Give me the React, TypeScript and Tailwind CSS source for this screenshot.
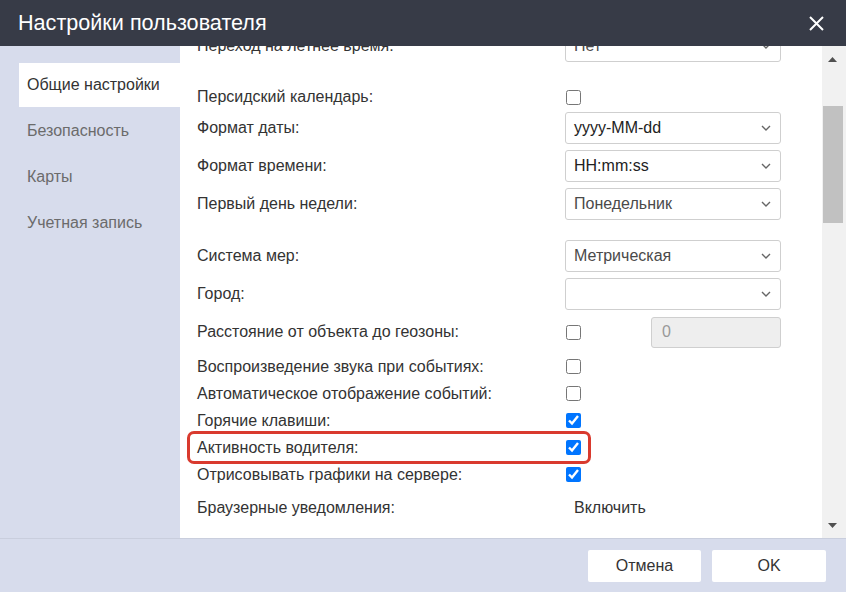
import React from 'react';

const font = { fontFamily: '"Liberation Sans", Arial, sans-serif' };

function Chevron() {
  return (
    <svg width="10" height="6" viewBox="0 0 10 6" className="shrink-0">
      <path d="M1 1l4 4 4-4" fill="none" stroke="#666" strokeWidth="1.4" />
    </svg>
  );
}

function Select({ value, muted }: { value?: string; muted?: boolean }) {
  return (
    <div className="flex h-[32px] w-[216px] items-center justify-between rounded-[3px] border border-[#cfcfcf] bg-white pl-[8px] pr-[9px]">
      <span className={`text-[16px] ${muted ? 'text-[#4a4a4a]' : 'text-[#222]'}`}>{value}</span>
      <Chevron />
    </div>
  );
}

function Check({ checked }: { checked?: boolean }) {
  return (
    <input
      type="checkbox"
      defaultChecked={checked}
      className="m-0 ml-[1px] h-[15px] w-[15px] accent-[#0075ff]"
    />
  );
}

function Row({
  label,
  children,
  h = 'h-[32px]',
  mt = '',
}: {
  label: string;
  children?: React.ReactNode;
  h?: string;
  mt?: string;
}) {
  return (
    <div className={`flex items-center ${h} ${mt}`}>
      <div className="w-[368px] shrink-0 whitespace-nowrap text-[16px] text-[#333]">{label}</div>
      {children}
    </div>
  );
}

const tabs = ['Общие настройки', 'Безопасность', 'Карты', 'Учетная запись'];

export default function App() {
  return (
    <div className="flex h-[592px] w-[846px] flex-col overflow-hidden bg-[#d7dcec]" style={font}>
      {/* Header */}
      <div className="flex h-[46px] shrink-0 items-center justify-between bg-[#373b47] pl-[18px] pr-[22px]">
        <span className="text-[21.6px] text-white">Настройки пользователя</span>
        <svg width="15" height="15" viewBox="0 0 15 15">
          <path d="M1 1l13 13M14 1L1 14" stroke="#fff" strokeWidth="2" />
        </svg>
      </div>

      <div className="flex min-h-0 flex-1">
        {/* Sidebar */}
        <div className="flex w-[180px] shrink-0 flex-col gap-[2px] pl-[19px] pt-[17px]">
          {tabs.map((t, i) => (
            <div
              key={t}
              className={`flex h-[44px] items-center pl-[8px] text-[16px] ${
                i === 0 ? 'bg-white text-[#333]' : 'text-[#6b6b6b]'
              }`}
            >
              {t}
            </div>
          ))}
        </div>

        {/* Content */}
        <div className="relative flex min-w-0 flex-1 overflow-hidden bg-white">
          <div className="flex-1 overflow-hidden pl-[17px]">
            <div className="mt-[-16px] flex flex-col">
              <Row label="Переход на летнее время:">
                <Select value="Нет" muted />
              </Row>
              <Row label="Персидский календарь:" h="h-[26px]" mt="mt-[22px]">
                <Check />
              </Row>
              <Row label="Формат даты:" mt="mt-[2px]">
                <Select value="yyyy-MM-dd" />
              </Row>
              <Row label="Формат времени:" mt="mt-[6px]">
                <Select value="HH:mm:ss" />
              </Row>
              <Row label="Первый день недели:" mt="mt-[6px]">
                <Select value="Понедельник" muted />
              </Row>
              <Row label="Система мер:" mt="mt-[20px]">
                <Select value="Метрическая" muted />
              </Row>
              <Row label="Город:" mt="mt-[6px]">
                <Select />
              </Row>
              <Row label="Расстояние от объекта до геозоны:" mt="mt-[6px]">
                <Check />
                <div className="ml-[70px] flex h-[31px] w-[130px] items-center rounded-[3px] border border-[#cfcfcf] bg-[#eeeeee] pl-[10px] text-[16px] text-[#999]">
                  0
                </div>
              </Row>
              <Row label="Воспроизведение звука при событиях:" h="h-[27px]" mt="mt-[5px]">
                <Check />
              </Row>
              <Row label="Автоматическое отображение событий:" h="h-[27px]">
                <Check />
              </Row>
              <Row label="Горячие клавиши:" h="h-[27px]">
                <Check checked />
              </Row>
              <div className="relative">
                <Row label="Активность водителя:" h="h-[27px]">
                  <Check checked />
                </Row>
                <div className="pointer-events-none absolute left-[-10px] top-[-3px] h-[33px] w-[404px] rounded-[7px] border-[3px] border-[#d93a2e]" />
              </div>
              <Row label="Отрисовывать графики на сервере:" h="h-[27px]">
                <Check checked />
              </Row>
              <Row label="Браузерные уведомления:" h="h-[27px]" mt="mt-[6px]">
                <span className="pl-[9px] text-[16px] text-[#333]">Включить</span>
              </Row>
            </div>
          </div>

          {/* Scrollbar */}
          <div className="flex w-[24px] shrink-0 flex-col items-stretch bg-[#f1f1f1]">
            <div className="flex h-[26px] items-center justify-center pr-[4px]">
              <svg width="9" height="5" viewBox="0 0 9 5">
                <path d="M0 5L4.5 0 9 5z" fill="#505050" />
              </svg>
            </div>
            <div className="ml-[1px] mr-[3px] mt-[34px] h-[117px] bg-[#c1c1c1]" />
            <div className="flex-1" />
            <div className="flex h-[26px] items-center justify-center pr-[4px]">
              <svg width="9" height="5" viewBox="0 0 9 5">
                <path d="M0 0L4.5 5 9 0z" fill="#505050" />
              </svg>
            </div>
          </div>
        </div>
      </div>

      {/* Footer */}
      <div className="flex h-[54px] shrink-0 items-center justify-end gap-[11px] border-t border-[#c9cedd] pr-[20px]">
        <button className="h-[32px] w-[113px] rounded-[2px] bg-white text-[16px] text-[#333]">Отмена</button>
        <button className="h-[32px] w-[114px] rounded-[2px] bg-white text-[16px] text-[#333]">OK</button>
      </div>
    </div>
  );
}
